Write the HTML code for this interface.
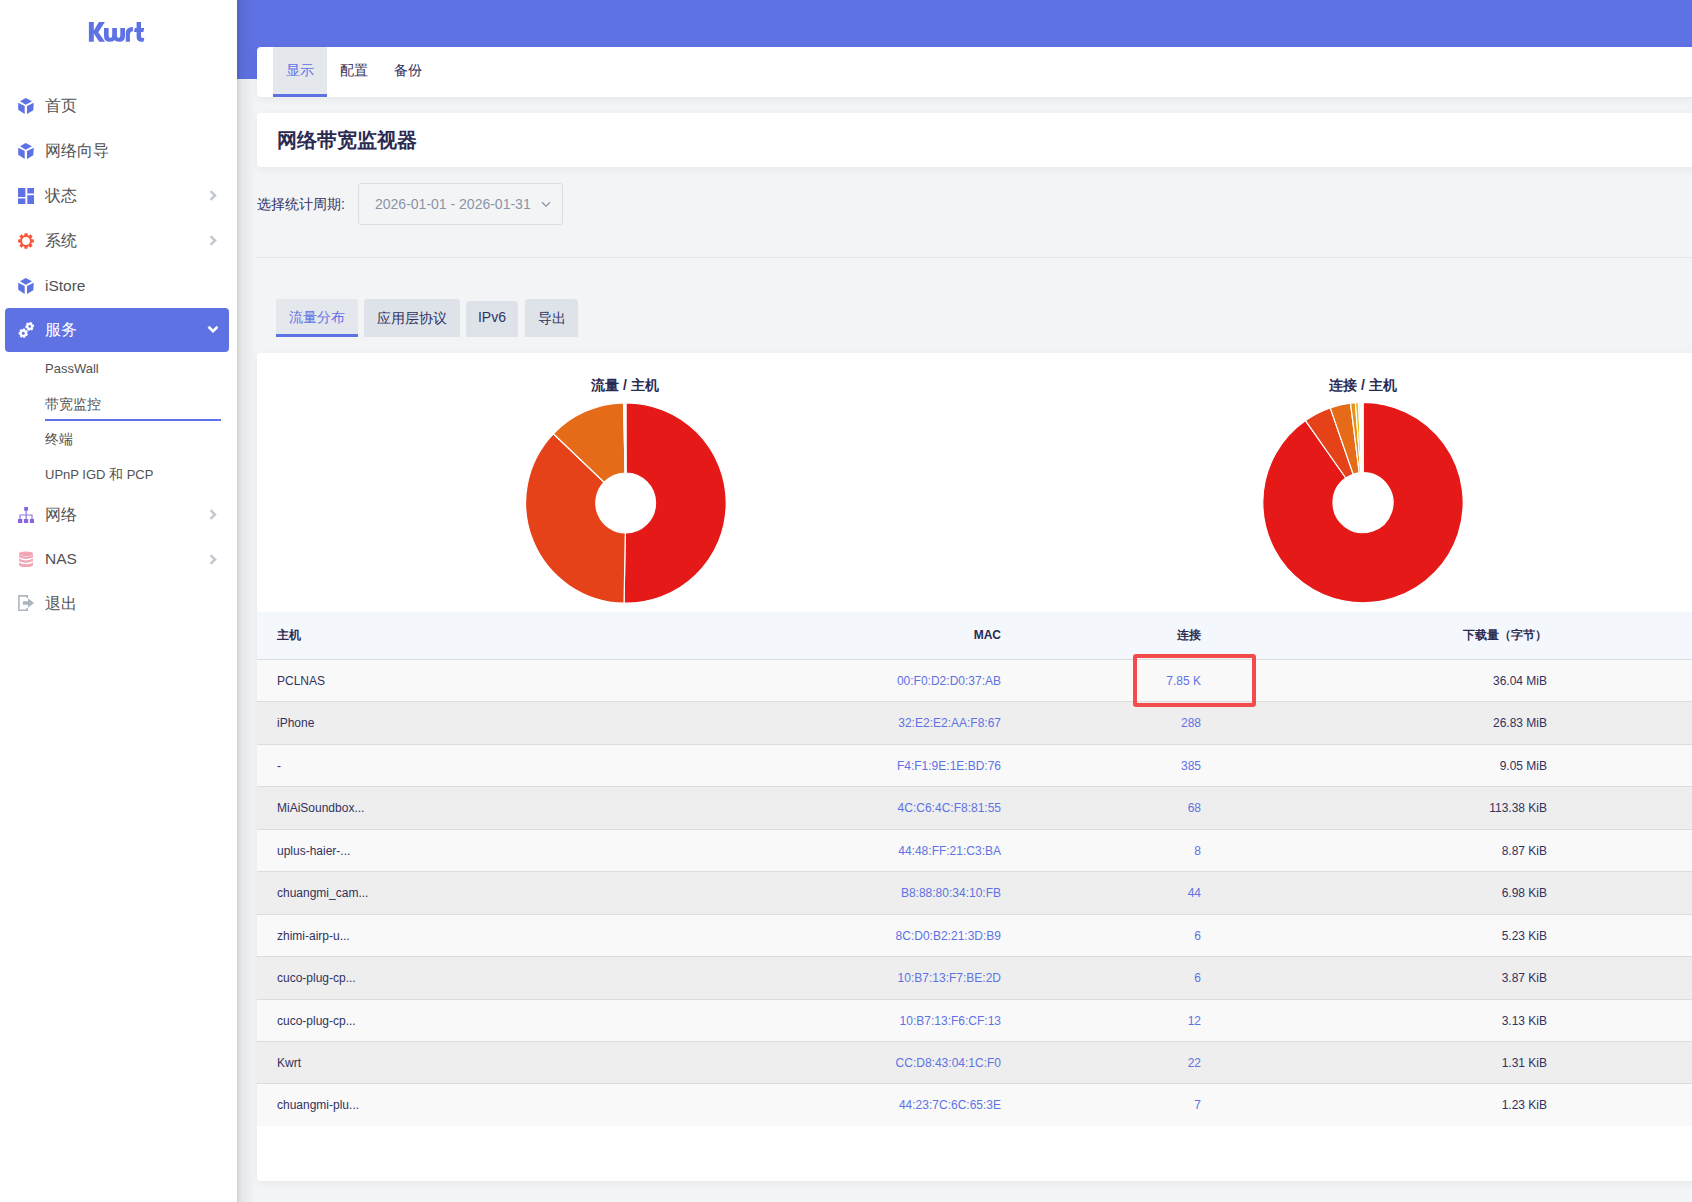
<!DOCTYPE html>
<html><head><meta charset="utf-8">
<style>
*{box-sizing:border-box;margin:0;padding:0}
html,body{width:1692px;height:1202px;overflow:hidden}
body{font-family:"Liberation Sans",sans-serif;background:#f3f4f6;position:relative;color:#32325d}
.abs{position:absolute}
#side{position:absolute;left:0;top:0;width:237px;height:1202px;background:#fff;z-index:5}
#shadow{position:absolute;left:237px;top:0;width:18px;height:1202px;background:linear-gradient(to right,rgba(0,0,0,.13),rgba(0,0,0,.06) 25%,rgba(0,0,0,0));z-index:4}
.logo{position:absolute;left:88px;top:13px;font-size:27px;font-weight:bold;color:#5e72e4;letter-spacing:-1.3px;line-height:38px}
.mi{position:absolute;left:0;width:237px;height:44px;line-height:44px;font-size:16px;color:#525252}
.mi .t{position:absolute;left:45px;top:0}
.mi svg.ic{position:absolute;left:18px;top:14px;width:16px;height:16px}
.mi svg.ch{position:absolute;left:209px;top:16px;width:8px;height:11px}
.nas svg.ch{top:17px}
.sub{position:absolute;left:45px;font-size:14px;color:#525252;height:24px;line-height:24px}
#hdr{position:absolute;left:237px;top:0;width:1455px;height:79px;background:#5e72e4}
.card{position:absolute;left:257px;width:1475px;background:#fff;border-radius:4px;box-shadow:0 2px 8px rgba(0,0,0,.055)}
.act{position:absolute;left:5px;top:308px;width:224px;height:44px;background:#5e72e4;border-radius:4px}
.lat{font-size:15.5px}
.lat2{font-size:13px}
.cj{font-size:14px}
.uline{position:absolute;left:45px;top:419px;width:176px;height:2px;background:#5e72e4}
.tab1{position:absolute;top:0;height:50px;width:54px;text-align:center;font-size:14px;line-height:47px;color:#32325d}
.tab1.on{background:#e4e7ec;color:#5e72e4;border-bottom:3px solid #5e72e4}
.title{position:absolute;left:20px;top:0;line-height:54px;font-size:20px;font-weight:bold;color:#2b2b52}
.lbl{position:absolute;left:257px;top:192px;font-size:14px;line-height:24px;color:#32325d}
.sel{position:absolute;left:358px;top:183px;width:205px;height:42px;border:1px solid #d9dde5;border-radius:3px;font-size:14px;line-height:40px;padding-left:16px;color:#8a94a6}
.hr{position:absolute;left:257px;top:257px;width:1435px;height:1px;background:#e3e5ea}
.tab2{position:absolute;top:299px;height:38px;background:#dee3ea;border-radius:3px 3px 0 0;font-size:14px;line-height:38px;text-align:center;color:#32325d}
.tab2.on{background:#e4e7ec;color:#5e72e4;border-bottom:3px solid #5e72e4;line-height:37px}
.tab2.lt{top:301px;height:36px;line-height:33px}
.ptitle{position:absolute;top:23px;width:200px;text-align:center;font-size:14px;font-weight:bold;color:#2b2b52;line-height:18px}
.th{position:absolute;left:0;width:1475px;height:47px;background:#f4f7fb;font-size:12px;font-weight:bold;color:#2b2b52;line-height:47px}
.tr{position:absolute;left:0;width:1475px;height:42.44px;border-top:1px solid #dcdcdc;font-size:12px;line-height:42.5px;color:#32325d}
.tr.odd{background:#f9f9f9}.tr.even{background:#eeeeee}
.c0{position:absolute;left:20px}
.c1{position:absolute;right:731px}
.c2{position:absolute;right:531px}
.c3{position:absolute;right:185px}
.bl{color:#5e72e4}
.redbox{position:absolute;left:876px;top:301px;width:123px;height:53px;border:4px solid #f44c4c;border-radius:3px}
</style></head><body>
<div id="side">
  <svg style="position:absolute;left:0;top:0" width="237" height="60" viewBox="0 0 237 60"><g fill="#5e72e4">
<path d="M88.9 22H93.8V30.6L99 22H104.9L98.3 32.2L105 41.8H99.2L93.8 33.6V41.8H88.9Z"/>
<path d="M104 27.9H108.65V35.3Q108.65 37.9 110.4 37.9Q112.2 37.9 112.2 35.3V27.9H116.9V35.3Q116.9 37.9 118.6 37.9Q120.3 37.9 120.3 35.3V27.9H125V36Q125 41.8 119.5 41.8Q116.4 41.8 114.55 40.2Q112.7 41.8 109.6 41.8Q104 41.8 104 36Z"/>
<path d="M125.8 41.8V33.5Q125.8 27.1 132.9 27.1V31.3Q129.9 31.3 129.9 35V41.8Z"/>
<path d="M136.6 22H141V27.9H144.2L143.4 31.9H141V36.3Q141 37.9 142.6 37.9H144.3L143.5 41.8H141.8Q136.6 41.8 136.6 37V31.9H134L134.8 27.9H136.6Z"/>
</g></svg>
  <div class="mi" style="top:84px"><svg class="ic" viewBox="0 0 16 16"><path fill="#5e72e4" d="M7.7 0L14 3.2L7.7 6.8L2 3.2Z M0.2 4.8L6.7 8L6.7 16L0.2 11.7Z M9 8L15.8 4.8L15.3 12.3L9 16Z"/></svg><span class="t">首页</span></div>
  <div class="mi" style="top:129px"><svg class="ic" viewBox="0 0 16 16"><path fill="#5e72e4" d="M7.7 0L14 3.2L7.7 6.8L2 3.2Z M0.2 4.8L6.7 8L6.7 16L0.2 11.7Z M9 8L15.8 4.8L15.3 12.3L9 16Z"/></svg><span class="t">网络向导</span></div>
  <div class="mi" style="top:174px"><svg class="ic" viewBox="0 0 16 16"><g fill="#5e72e4"><rect x="0" y="0" width="7.4" height="9"/><rect x="9.3" y="0" width="6.7" height="5.5"/><rect x="0" y="10.4" width="7.4" height="5.6"/><rect x="9.3" y="7.2" width="6.7" height="8.8"/></g></svg><span class="t">状态</span><svg class="ch" viewBox="0 0 8 11"><path d="M1.5 1.2L6 5.5L1.5 9.8" fill="none" stroke="#c3c8d2" stroke-width="2.5"/></svg></div>
  <div class="mi" style="top:219px"><svg class="ic" viewBox="0 0 16 16"><path fill="#f9573a" fill-rule="evenodd" d="M5.74 2.55 L6.28 2.36 L6.47 0.15 L9.53 0.15 L9.72 2.36 L10.26 2.55 L10.77 2.79 L12.47 1.37 L14.63 3.53 L13.21 5.23 L13.45 5.74 L13.64 6.28 L15.85 6.47 L15.85 9.53 L13.64 9.72 L13.45 10.26 L13.21 10.77 L14.63 12.47 L12.47 14.63 L10.77 13.21 L10.26 13.45 L9.72 13.64 L9.53 15.85 L6.47 15.85 L6.28 13.64 L5.74 13.45 L5.23 13.21 L3.53 14.63 L1.37 12.47 L2.79 10.77 L2.55 10.26 L2.36 9.72 L0.15 9.53 L0.15 6.47 L2.36 6.28 L2.55 5.74 L2.79 5.23 L1.37 3.53 L3.53 1.37 L5.23 2.79Z M4.10 8.00 a3.90 3.90 0 1 0 7.80 0 a3.90 3.90 0 1 0 -7.80 0Z"/></svg><span class="t">系统</span><svg class="ch" viewBox="0 0 8 11"><path d="M1.5 1.2L6 5.5L1.5 9.8" fill="none" stroke="#c3c8d2" stroke-width="2.5"/></svg></div>
  <div class="mi" style="top:264px"><svg class="ic" viewBox="0 0 16 16"><path fill="#5e72e4" d="M7.7 0L14 3.2L7.7 6.8L2 3.2Z M0.2 4.8L6.7 8L6.7 16L0.2 11.7Z M9 8L15.8 4.8L15.3 12.3L9 16Z"/></svg><span class="t lat">iStore</span></div>
  <div class="act"><div class="mi" style="top:0;left:-5px;color:#fff"><svg class="ic" viewBox="0 0 16 16"><path fill="#fff" fill-rule="evenodd" d="M4.33 7.73 L4.55 7.68 L4.97 6.41 L7.25 6.81 L7.21 8.15 L7.40 8.28 L7.59 8.42 L8.83 7.95 L9.95 9.99 L8.88 10.79 L8.90 11.02 L8.90 11.25 L10.04 11.94 L9.14 14.08 L7.85 13.74 L7.68 13.90 L7.50 14.05 L7.68 15.37 L5.44 16.00 L4.91 14.78 L4.67 14.75 L4.45 14.70 L3.52 15.66 L1.64 14.30 L2.26 13.12 L2.14 12.92 L2.03 12.71 L0.71 12.59 L0.59 10.27 L1.90 10.02 L1.98 9.80 L2.08 9.59 L1.35 8.48 L3.09 6.94 L4.10 7.80Z M3.80 11.20 a1.50 1.50 0 1 0 3.00 0 a1.50 1.50 0 1 0 -3.00 0Z M11.11 1.05 L11.46 1.01 L12.01 -0.09 L14.35 0.76 L14.06 1.95 L14.30 2.21 L14.52 2.50 L15.74 2.43 L16.18 4.87 L15.00 5.22 L14.89 5.56 L14.76 5.89 L15.43 6.92 L13.53 8.51 L12.64 7.67 L12.29 7.75 L11.94 7.79 L11.39 8.89 L9.05 8.04 L9.34 6.85 L9.10 6.59 L8.88 6.30 L7.66 6.37 L7.22 3.93 L8.40 3.58 L8.51 3.24 L8.64 2.91 L7.97 1.88 L9.87 0.29 L10.76 1.13Z M10.40 4.40 a1.30 1.30 0 1 0 2.60 0 a1.30 1.30 0 1 0 -2.60 0Z"/></svg><span class="t">服务</span><svg style="position:absolute;left:207px;top:17px;width:12px;height:9px" viewBox="0 0 12 9"><path d="M1.5 1.8L6 6.2L10.5 1.8" fill="none" stroke="#fff" stroke-width="2.6"/></svg></div></div>
  <div class="sub" style="top:357px;font-size:13px">PassWall</div>
  <div class="sub" style="top:392px">带宽监控</div>
  <div class="uline"></div>
  <div class="sub" style="top:427px">终端</div>
  <div class="sub lat2" style="top:462px">UPnP IGD <span class="cj">和</span> PCP</div>
  <div class="mi" style="top:493px"><svg class="ic" viewBox="0 0 16 16"><g fill="#8965e0"><rect x="6.2" y="0" width="3.8" height="3.8"/><rect x="0" y="12" width="4.3" height="4"/><rect x="5.9" y="12" width="4.3" height="4"/><rect x="11.9" y="12" width="4.1" height="4"/></g><g fill="none" stroke="#9474e4" stroke-width="1.2"><path d="M8.1 3.8V12 M2.1 12V8 H14 V12"/></g></svg><span class="t">网络</span><svg class="ch" viewBox="0 0 8 11"><path d="M1.5 1.2L6 5.5L1.5 9.8" fill="none" stroke="#c3c8d2" stroke-width="2.5"/></svg></div>
  <div class="mi nas" style="top:537px"><svg class="ic" viewBox="0 0 16 16"><g fill="#f3a4b5"><ellipse cx="8" cy="2.8" rx="7" ry="2.4"/><path d="M1 3.8 Q8 7.8 15 3.8 V6.2 Q8 9.6 1 6.2Z"/><path d="M1 7.6 Q8 11.4 15 7.6 V10 Q8 13.4 1 10Z"/><path d="M1 11.4 Q8 15.2 15 11.4 V13.4 Q15 16 8 16 Q1 16 1 13.4Z"/></g></svg><span class="t lat">NAS</span><svg class="ch" viewBox="0 0 8 11"><path d="M1.5 1.2L6 5.5L1.5 9.8" fill="none" stroke="#c3c8d2" stroke-width="2.5"/></svg></div>
  <div class="mi" style="top:582px"><svg class="ic" style="top:13px" viewBox="0 0 16 16"><g fill="none" stroke="#adb5bd" stroke-width="1.6"><path d="M9.2 3V0.9H0.9V15.2H9.2V13"/></g><path fill="#adb5bd" d="M4.8 6.2H10V3.3L16 8L10 12.7V9.8H4.8Z"/></svg><span class="t">退出</span></div>
</div>
<div id="shadow"></div>
<div id="hdr"></div>
<div class="card" style="top:47px;height:50px">
  <div class="tab1 on" style="left:16px">显示</div>
  <div class="tab1" style="left:70px">配置</div>
  <div class="tab1" style="left:124px">备份</div>
</div>
<div class="card" style="top:113px;height:54px"><div class="title">网络带宽监视器</div></div>
<div class="lbl">选择统计周期:</div>
<div class="sel">2026-01-01 - 2026-01-31<svg style="position:absolute;left:182px;top:17px;width:10px;height:7px" viewBox="0 0 10 7"><path d="M1 1.2L5 5.2L9 1.2" fill="none" stroke="#8a94a6" stroke-width="1.3"/></svg></div>
<div class="hr"></div>
<div class="tab2 on" style="left:276px;width:82px">流量分布</div>
<div class="tab2" style="left:364px;width:96px">应用层协议</div>
<div class="tab2 lt" style="left:466px;width:52px">IPv6</div>
<div class="tab2" style="left:525px;width:53px">导出</div>
<div class="card" style="top:353px;height:828px;width:1475px" id="main"><div class="ptitle" style="left:268px">流量 / 主机</div><div class="ptitle" style="left:1006px">连接 / 主机</div><svg class="abs" style="left:0;top:0" width="1435" height="260" viewBox="0 0 1435 260"><path d="M368.80 49.80 A100.20 100.20 0 1 1 367.05 250.18 L368.28 180.00 A30.00 30.00 0 1 0 368.80 120.00 Z" fill="hsl(0,80%,50%)" stroke="#fff" stroke-width="1.2" stroke-linejoin="round"/><path d="M367.05 250.18 A100.20 100.20 0 0 1 296.36 80.77 L347.11 129.27 A30.00 30.00 0 0 0 368.28 180.00 Z" fill="hsl(12,80%,50%)" stroke="#fff" stroke-width="1.2" stroke-linejoin="round"/><path d="M296.36 80.77 A100.20 100.20 0 0 1 366.53 49.83 L368.12 120.01 A30.00 30.00 0 0 0 347.11 129.27 Z" fill="hsl(24,80%,50%)" stroke="#fff" stroke-width="1.2" stroke-linejoin="round"/><path d="M366.53 49.83 A100.20 100.20 0 0 1 367.58 49.81 L368.43 120.00 A30.00 30.00 0 0 0 368.12 120.01 Z" fill="hsl(36,80%,50%)" stroke="#fff" stroke-width="1.2" stroke-linejoin="round"/><path d="M367.58 49.81 A100.20 100.20 0 0 1 367.75 49.81 L368.49 120.00 A30.00 30.00 0 0 0 368.43 120.00 Z" fill="hsl(48,80%,50%)" stroke="#fff" stroke-width="1.2" stroke-linejoin="round"/><path d="M367.75 49.81 A100.20 100.20 0 0 1 367.93 49.80 L368.54 120.00 A30.00 30.00 0 0 0 368.49 120.00 Z" fill="hsl(60,80%,50%)" stroke="#fff" stroke-width="1.2" stroke-linejoin="round"/><path d="M367.93 49.80 A100.20 100.20 0 0 1 368.10 49.80 L368.59 120.00 A30.00 30.00 0 0 0 368.54 120.00 Z" fill="hsl(72,80%,50%)" stroke="#fff" stroke-width="1.2" stroke-linejoin="round"/><path d="M368.10 49.80 A100.20 100.20 0 0 1 368.28 49.80 L368.64 120.00 A30.00 30.00 0 0 0 368.59 120.00 Z" fill="hsl(84,80%,50%)" stroke="#fff" stroke-width="1.2" stroke-linejoin="round"/><path d="M368.28 49.80 A100.20 100.20 0 0 1 368.45 49.80 L368.70 120.00 A30.00 30.00 0 0 0 368.64 120.00 Z" fill="hsl(96,80%,50%)" stroke="#fff" stroke-width="1.2" stroke-linejoin="round"/><path d="M368.45 49.80 A100.20 100.20 0 0 1 368.63 49.80 L368.75 120.00 A30.00 30.00 0 0 0 368.70 120.00 Z" fill="hsl(108,80%,50%)" stroke="#fff" stroke-width="1.2" stroke-linejoin="round"/><path d="M368.63 49.80 A100.20 100.20 0 0 1 368.80 49.80 L368.80 120.00 A30.00 30.00 0 0 0 368.75 120.00 Z" fill="hsl(120,80%,50%)" stroke="#fff" stroke-width="1.2" stroke-linejoin="round"/><path d="M1106.00 49.40 A100.20 100.20 0 1 1 1048.49 67.54 L1088.78 125.03 A30.00 30.00 0 1 0 1106.00 119.60 Z" fill="hsl(0,80%,50%)" stroke="#fff" stroke-width="1.2" stroke-linejoin="round"/><path d="M1048.49 67.54 A100.20 100.20 0 0 1 1073.24 54.91 L1096.19 121.25 A30.00 30.00 0 0 0 1088.78 125.03 Z" fill="hsl(12,80%,50%)" stroke="#fff" stroke-width="1.2" stroke-linejoin="round"/><path d="M1073.24 54.91 A100.20 100.20 0 0 1 1093.51 50.18 L1102.26 119.83 A30.00 30.00 0 0 0 1096.19 121.25 Z" fill="hsl(24,80%,50%)" stroke="#fff" stroke-width="1.2" stroke-linejoin="round"/><path d="M1093.51 50.18 A100.20 100.20 0 0 1 1098.41 49.69 L1103.73 119.69 A30.00 30.00 0 0 0 1102.26 119.83 Z" fill="hsl(36,80%,50%)" stroke="#fff" stroke-width="1.2" stroke-linejoin="round"/><path d="M1098.41 49.69 A100.20 100.20 0 0 1 1101.59 49.50 L1104.68 119.63 A30.00 30.00 0 0 0 1103.73 119.69 Z" fill="hsl(48,80%,50%)" stroke="#fff" stroke-width="1.2" stroke-linejoin="round"/><path d="M1101.59 49.50 A100.20 100.20 0 0 1 1103.18 49.44 L1105.15 119.61 A30.00 30.00 0 0 0 1104.68 119.63 Z" fill="hsl(60,80%,50%)" stroke="#fff" stroke-width="1.2" stroke-linejoin="round"/><path d="M1103.18 49.44 A100.20 100.20 0 0 1 1104.05 49.42 L1105.41 119.61 A30.00 30.00 0 0 0 1105.15 119.61 Z" fill="hsl(72,80%,50%)" stroke="#fff" stroke-width="1.2" stroke-linejoin="round"/><path d="M1104.05 49.42 A100.20 100.20 0 0 1 1104.62 49.41 L1105.59 119.60 A30.00 30.00 0 0 0 1105.41 119.61 Z" fill="hsl(84,80%,50%)" stroke="#fff" stroke-width="1.2" stroke-linejoin="round"/><path d="M1104.62 49.41 A100.20 100.20 0 0 1 1105.13 49.40 L1105.74 119.60 A30.00 30.00 0 0 0 1105.59 119.60 Z" fill="hsl(96,80%,50%)" stroke="#fff" stroke-width="1.2" stroke-linejoin="round"/><path d="M1105.13 49.40 A100.20 100.20 0 0 1 1105.57 49.40 L1105.87 119.60 A30.00 30.00 0 0 0 1105.74 119.60 Z" fill="hsl(108,80%,50%)" stroke="#fff" stroke-width="1.2" stroke-linejoin="round"/><path d="M1105.57 49.40 A100.20 100.20 0 0 1 1106.00 49.40 L1106.00 119.60 A30.00 30.00 0 0 0 1105.87 119.60 Z" fill="hsl(120,80%,50%)" stroke="#fff" stroke-width="1.2" stroke-linejoin="round"/></svg><div class="th" style="top:259px"><span class="c0">主机</span><span class="c1">MAC</span><span class="c2">连接</span><span class="c3">下载量（字节）</span></div><div class="tr odd" style="top:306.00px"><span class="c0">PCLNAS</span><span class="c1 bl">00:F0:D2:D0:37:AB</span><span class="c2 bl">7.85 K</span><span class="c3">36.04 MiB</span></div><div class="tr even" style="top:348.44px"><span class="c0">iPhone</span><span class="c1 bl">32:E2:E2:AA:F8:67</span><span class="c2 bl">288</span><span class="c3">26.83 MiB</span></div><div class="tr odd" style="top:390.88px"><span class="c0">-</span><span class="c1 bl">F4:F1:9E:1E:BD:76</span><span class="c2 bl">385</span><span class="c3">9.05 MiB</span></div><div class="tr even" style="top:433.32px"><span class="c0">MiAiSoundbox...</span><span class="c1 bl">4C:C6:4C:F8:81:55</span><span class="c2 bl">68</span><span class="c3">113.38 KiB</span></div><div class="tr odd" style="top:475.76px"><span class="c0">uplus-haier-...</span><span class="c1 bl">44:48:FF:21:C3:BA</span><span class="c2 bl">8</span><span class="c3">8.87 KiB</span></div><div class="tr even" style="top:518.20px"><span class="c0">chuangmi_cam...</span><span class="c1 bl">B8:88:80:34:10:FB</span><span class="c2 bl">44</span><span class="c3">6.98 KiB</span></div><div class="tr odd" style="top:560.64px"><span class="c0">zhimi-airp-u...</span><span class="c1 bl">8C:D0:B2:21:3D:B9</span><span class="c2 bl">6</span><span class="c3">5.23 KiB</span></div><div class="tr even" style="top:603.08px"><span class="c0">cuco-plug-cp...</span><span class="c1 bl">10:B7:13:F7:BE:2D</span><span class="c2 bl">6</span><span class="c3">3.87 KiB</span></div><div class="tr odd" style="top:645.52px"><span class="c0">cuco-plug-cp...</span><span class="c1 bl">10:B7:13:F6:CF:13</span><span class="c2 bl">12</span><span class="c3">3.13 KiB</span></div><div class="tr even" style="top:687.96px"><span class="c0">Kwrt</span><span class="c1 bl">CC:D8:43:04:1C:F0</span><span class="c2 bl">22</span><span class="c3">1.31 KiB</span></div><div class="tr odd" style="top:730.40px"><span class="c0">chuangmi-plu...</span><span class="c1 bl">44:23:7C:6C:65:3E</span><span class="c2 bl">7</span><span class="c3">1.23 KiB</span></div><div class="redbox"></div></div>
</body></html>
